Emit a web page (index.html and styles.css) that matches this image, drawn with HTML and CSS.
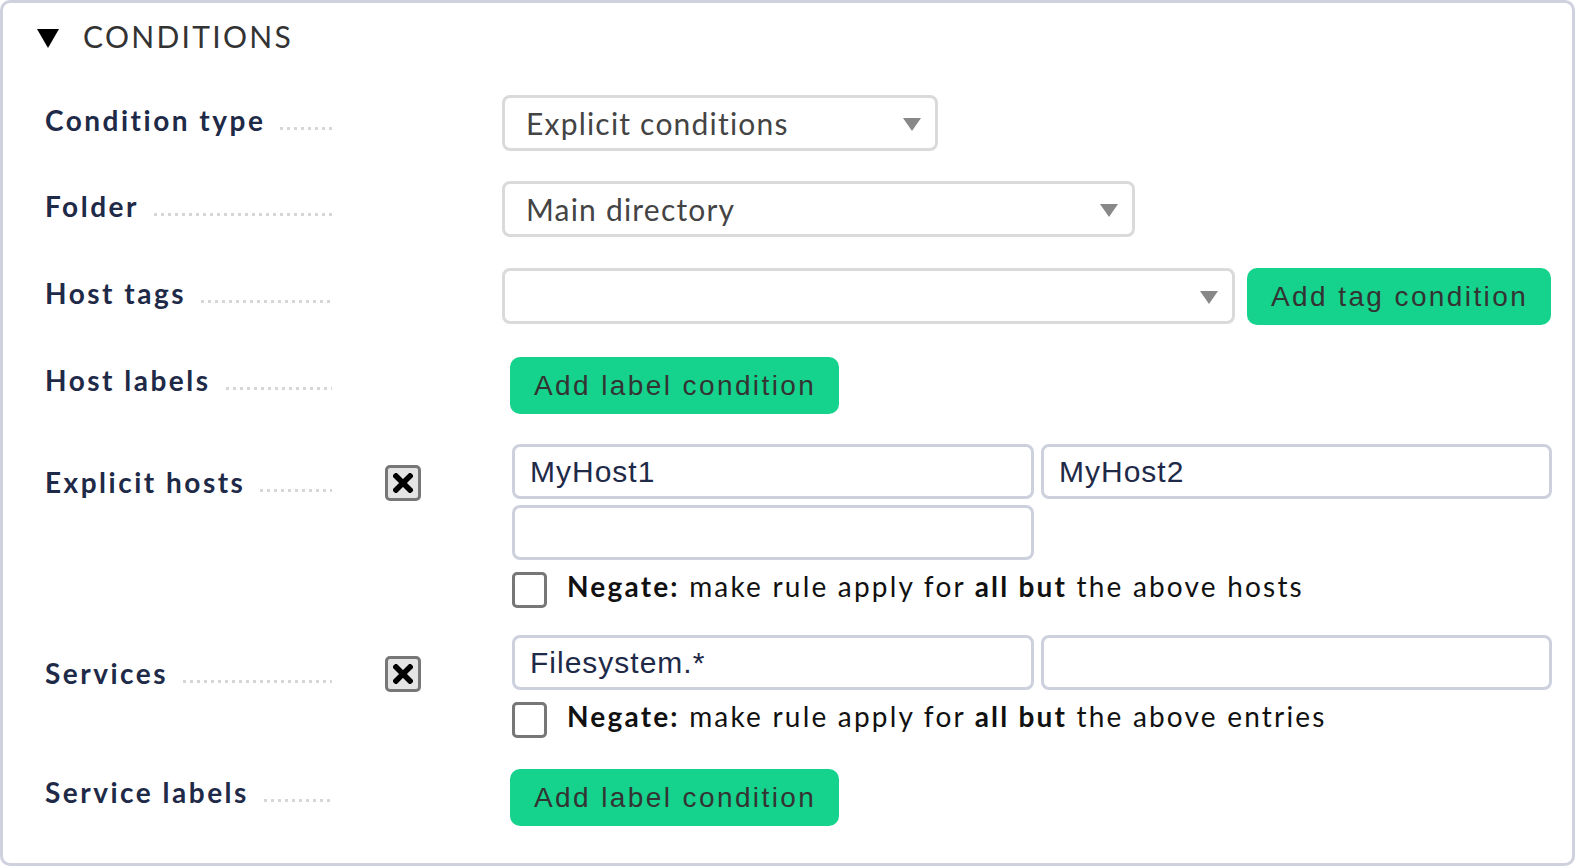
FILE: index.html
```html
<!DOCTYPE html>
<html>
<head>
<meta charset="utf-8">
<link rel="stylesheet" href="styles.css">
</head>
<body>
<div class="panel">
  <div class="head"><span class="tri"></span><span class="title">CONDITIONS</span></div>

  <div class="row r-sel r1">
    <div class="label"><span>Condition type</span><i class="leader"></i></div>
    <div class="icon-col"></div>
    <div class="field">
      <div class="select s1"><span>Explicit conditions</span><i class="arrow"></i></div>
    </div>
  </div>

  <div class="row r-sel r2">
    <div class="label"><span>Folder</span><i class="leader"></i></div>
    <div class="icon-col"></div>
    <div class="field">
      <div class="select s2"><span>Main directory</span><i class="arrow"></i></div>
    </div>
  </div>

  <div class="row r-sel r3">
    <div class="label"><span>Host tags</span><i class="leader"></i></div>
    <div class="icon-col"></div>
    <div class="field inline">
      <div class="select s3"><span></span><i class="arrow"></i></div>
      <button class="btn">Add tag condition</button>
    </div>
  </div>

  <div class="row r-btn r4">
    <div class="label"><span>Host labels</span><i class="leader"></i></div>
    <div class="icon-col"></div>
    <div class="field">
      <button class="btn btn-l">Add label condition</button>
    </div>
  </div>

  <div class="row r-list r5">
    <div class="label"><span>Explicit hosts</span><i class="leader"></i></div>
    <div class="icon-col"><span class="xbox"><svg viewBox="0 0 20 20" width="20" height="20"><path d="M3 3 L17 17 M17 3 L3 17" stroke="#000" stroke-width="5.5" stroke-linecap="square"/></svg></span></div>
    <div class="field list">
      <div class="inputs">
        <div class="input">MyHost1</div>
        <div class="input">MyHost2</div>
        <div class="input"></div>
      </div>
      <div class="check"><span class="cb"></span><span class="ctext"><b>Negate:</b> make rule apply for <b>all but</b> the above hosts</span></div>
    </div>
  </div>

  <div class="row r-list r6">
    <div class="label"><span>Services</span><i class="leader"></i></div>
    <div class="icon-col"><span class="xbox"><svg viewBox="0 0 20 20" width="20" height="20"><path d="M3 3 L17 17 M17 3 L3 17" stroke="#000" stroke-width="5.5" stroke-linecap="square"/></svg></span></div>
    <div class="field list">
      <div class="inputs">
        <div class="input">Filesystem.*</div>
        <div class="input"></div>
      </div>
      <div class="check"><span class="cb"></span><span class="ctext"><b>Negate:</b> make rule apply for <b>all but</b> the above entries</span></div>
    </div>
  </div>

  <div class="row r-btn r7">
    <div class="label"><span>Service labels</span><i class="leader"></i></div>
    <div class="icon-col"></div>
    <div class="field">
      <button class="btn btn-l">Add label condition</button>
    </div>
  </div>
</div>
</body>
</html>
```

FILE: styles.css
```css
html, body {
  margin: 0;
  padding: 0;
  background: #fff;
}

.panel {
  box-sizing: border-box;
  width: 1575px;
  height: 866px;
  border: 3px solid #cfd1de;
  border-radius: 10px;
  padding: 15px 20px 0 42px;
  font-family: Lato, "Open Sans", sans-serif;
}

.head {
  display: flex;
  align-items: center;
  height: 36px;
  margin-left: -8px;
}

.tri {
  width: 0;
  height: 0;
  border-left: 11px solid transparent;
  border-right: 11px solid transparent;
  border-top: 19px solid #000;
  margin-top: 4px;
}

.title {
  margin-left: 24px;
  font-size: 30px;
  line-height: 36px;
  letter-spacing: 2.3px;
  color: #333;
}

.row {
  display: grid;
  grid-template-columns: 287px 53px 36px 1fr;
  column-gap: 0;
}

.field {
  margin-left: 81px;
}

.r-sel, .r-btn {
  align-items: center;
}

.r1 { margin-top: 41px; }
.r2 { margin-top: 30px; }
.r3 { margin-top: 29px; }
.r4 { margin-top: 32px; }
.r5 { margin-top: 30px; }
.r6 { margin-top: 27px; }
.r7 { margin-top: 31px; }

.label {
  display: flex;
  align-items: baseline;
  font-weight: 700;
  font-size: 28px;
  line-height: 34px;
  letter-spacing: 2.5px;
  color: #1e2a47;
  white-space: nowrap;
}

.r-sel .label { padding-bottom: 6px; }
.r-btn .label { padding-bottom: 12px; }
.r-list .label { align-self: start; margin-top: 21px; }

.leader {
  flex: 1;
  height: 5px;
  margin-left: 13px;
  background-image: radial-gradient(circle, #d6d6d6 1.4px, transparent 1.9px);
  background-size: 7px 5px;
  background-repeat: repeat-x;
  background-position: 0 0;
}

.icon-col {
  grid-column: 3;
}

.field {
  grid-column: 4;
}

.select {
  box-sizing: border-box;
  flex: none;
  height: 56px;
  border: 3px solid #dadada;
  border-radius: 8px;
  display: flex;
  align-items: center;
  justify-content: space-between;
  padding: 0 14px 0 21px;
  font-size: 30px;
  letter-spacing: 1.2px;
  color: #444;
  background: #fff;
}

.s1 { width: 436px; }
.s2 { width: 633px; }
.s3 { width: 733px; }

.arrow {
  width: 0;
  height: 0;
  border-left: 9.5px solid transparent;
  border-right: 9.5px solid transparent;
  border-top: 13px solid #888;
  margin-top: 3px;
}

.inline {
  display: flex;
  align-items: center;
  gap: 12px;
}

.btn {
  box-sizing: border-box;
  flex: none;
  white-space: nowrap;
  height: 57px;
  border: none;
  border-radius: 10px;
  background: #15d38c;
  color: #333;
  font-family: "Liberation Sans", Arial, sans-serif;
  font-size: 28px;
  letter-spacing: 2.4px;
  padding: 0 23px 0 24px;
  margin-top: 2px;
}

.btn-l {
  margin-left: 8px;
  margin-top: 0;
}

.list {
  padding-left: 10px;
}

.inputs {
  display: grid;
  grid-template-columns: 522px 1fr;
  column-gap: 7px;
  row-gap: 6px;
}

.input {
  box-sizing: border-box;
  height: 55px;
  border: 3px solid #cdd0dd;
  border-radius: 8px;
  padding-left: 15px;
  display: flex;
  align-items: center;
  font-family: "Liberation Sans", Arial, sans-serif;
  font-size: 30px;
  letter-spacing: 1px;
  color: #1e2a47;
}

.xbox {
  box-sizing: border-box;
  width: 36px;
  height: 36px;
  margin-top: 21px;
  border: 3px solid #777;
  border-radius: 5px;
  background: #e4e4e4;
  display: flex;
  align-items: center;
  justify-content: center;
}

.xbox svg {
  display: block;
}

.check {
  display: flex;
  align-items: center;
  margin-top: 12px;
}

.cb {
  box-sizing: border-box;
  width: 35px;
  height: 36px;
  border: 3px solid #777;
  border-radius: 5px;
  background: #fff;
  flex: none;
}

.ctext {
  margin-left: 20px;
  font-size: 28px;
  letter-spacing: 2.2px;
  color: #111;
  margin-top: -8px;
}

.ctext b {
  font-weight: 700;
}
```
